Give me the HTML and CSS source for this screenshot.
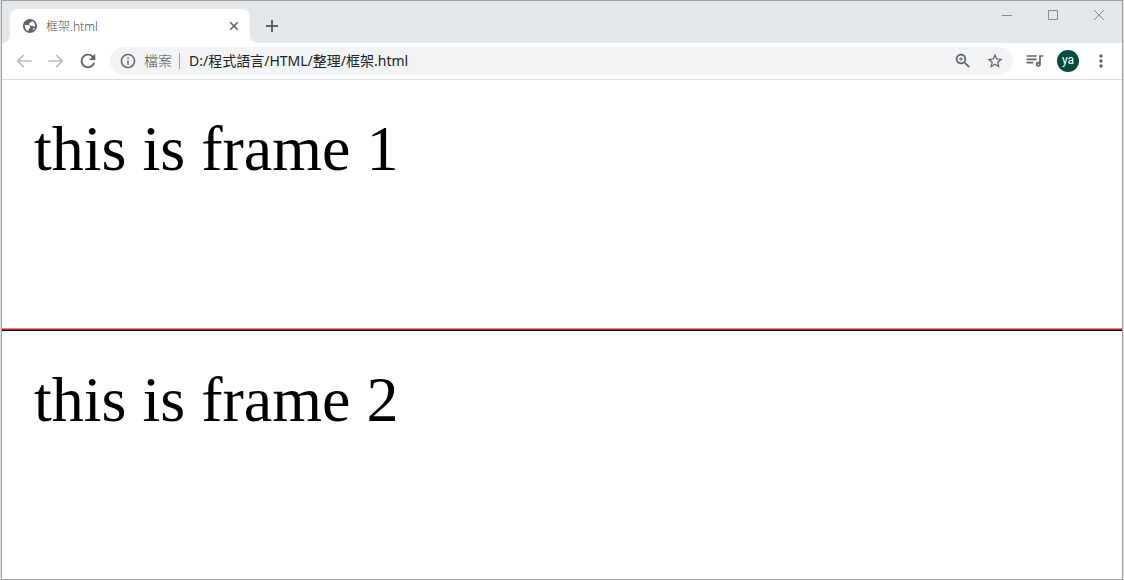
FILE: index.html
```html
<!DOCTYPE html>
<html lang="zh-Hant">
<head>
<meta charset="utf-8">
<meta name="viewport" content="width=device-width, initial-scale=1">
<title>框架.html</title>
<link rel="stylesheet" href="styles.css">
</head>
<body>
<div class="window">
  <header class="titlebar">
    <div class="tab">
      <svg class="icon-14" viewBox="2 2 20 20" aria-hidden="true"><path d="M12 2C6.48 2 2 6.48 2 12s4.48 10 10 10 10-4.48 10-10S17.52 2 12 2zM4.600 10.500H8.500c2.200 0 3.700 1 3.700 3.200 0 1.300-.8 2-2.200 2.200v3.400c-3.400-.8-5.700-4-5.400-8.800zM19.200 14.500c-.7 2-2.300 3.700-4.200 4.400 1.500-1.500 1-2.700 2-3.400.6-.6 1.400-.9 2.200-1zM19.400 12.200c-1.400.8-3 .2-3.700-.7h-3c-1.200-.2-2-1.200-2-2.400 0-1.300.9-2.100 2.100-2.200 1.300-.1 1.800-.7 1.800-2 3 .9 5 3.800 4.800 7.300z"/></svg>
      <span class="tab-title">框架.html</span>
      <button class="plain" aria-label="Close tab"><svg class="icon-16" viewBox="0 0 16 16"><path class="line cross" d="M4.200 4.200l7.600 7.600M11.800 4.200l-7.600 7.600"/></svg></button>
    </div>
    <button class="plain new-tab" aria-label="New tab"><svg class="icon-16" viewBox="0 0 16 16"><path class="line" d="M8 2v12M2 8h12"/></svg></button>
    <div class="controls">
      <button class="plain" aria-label="Minimize"><svg class="icon-12" viewBox="0 0 12 12"><path class="thin" d="M1 6.500h10"/></svg></button>
      <button class="plain" aria-label="Maximize"><svg class="icon-12" viewBox="0 0 12 12"><path class="thin" d="M1.500 1.500h9v9h-9z"/></svg></button>
      <button class="plain" aria-label="Close"><svg class="icon-12" viewBox="0 0 12 12"><path class="thin" d="M1 1l10 10M11 1L1 11"/></svg></button>
    </div>
  </header>
  <nav class="toolbar">
    <button class="plain muted" aria-label="Back"><svg class="icon-20" viewBox="0 0 24 24"><path d="M21 11H6.830l5.590-5.590L11 4l-8 8 8 8 1.410-1.410L6.830 13H21v-2z"/></svg></button>
    <button class="plain muted" aria-label="Forward"><svg class="icon-20" viewBox="0 0 24 24"><path d="M13 4l-1.410 1.410L17.170 11H3v2h14.170l-5.580 5.590L13 20l8-8z"/></svg></button>
    <button class="plain" aria-label="Reload"><svg class="icon-20" viewBox="1 1 22 22"><path d="M17.650 6.350C16.200 4.900 14.210 4 12 4c-4.420 0-7.990 3.580-7.990 8s3.570 8 7.990 8c3.730 0 6.840-2.550 7.730-6h-2.080c-.82 2.330-3.040 4-5.650 4-3.310 0-6-2.690-6-6s2.690-6 6-6c1.660 0 3.140.69 4.220 1.780L13 11h7V4l-2.350 2.350z"/></svg></button>
    <div class="omnibox">
      <svg class="icon-16" viewBox="1 1 22 22" aria-hidden="true"><path d="M11 17h2v-6h-2v6zm1-15C6.480 2 2 6.480 2 12s4.480 10 10 10 10-4.480 10-10S17.520 2 12 2zm0 18c-4.410 0-8-3.590-8-8s3.590-8 8-8 8 3.590 8 8-3.590 8-8 8zM11 9h2V7h-2v2z"/></svg>
      <label class="scheme" for="address">檔案</label>
      <input class="address" id="address" type="text" value="D:/程式語言/HTML/整理/框架.html">
      <button class="plain" aria-label="Zoom"><svg class="icon-16" viewBox="2 2 20 20"><path d="M15.500 14h-.79l-.28-.27C15.410 12.590 16 11.110 16 9.500 16 5.910 13.090 3 9.500 3S3 5.910 3 9.500 5.910 16 9.500 16c1.610 0 3.090-.59 4.230-1.570l.27.28v.79l5 4.990L20.490 19l-4.990-5zm-6 0C7.010 14 5 11.990 5 9.500S7.010 5 9.500 5 14 7.010 14 9.500 11.990 14 9.500 14zM12 10h-2v2H9v-2H7V9h2V7h1v2h2v1z"/></svg></button>
      <button class="plain" aria-label="Bookmark"><svg class="icon-16" viewBox="1.500 1.500 21 21"><path d="M22 9.240l-7.190-.62L12 2 9.190 8.630 2 9.240l5.460 4.730L5.820 21 12 17.270 18.180 21l-1.630-7.030L22 9.240zM12 15.400l-3.760 2.270 1-4.280-3.320-2.880 4.380-.38L12 6.100l1.710 4.040 4.380.38-3.320 2.880 1 4.280L12 15.400z"/></svg></button>
    </div>
    <div class="actions">
      <button class="plain" aria-label="Media"><svg class="icon-20" viewBox="0 0 24 24"><path d="M2 5h12v2H2zM2 9h12v2H2zM2 13h8v2H2zM16 5h6v2h-3v9a3 3 0 1 1-3-3c.35 0 .69.060 1 .18V5zM16 15a1 1 0 1 0 0 2 1 1 0 0 0 0-2z"/></svg></button>
      <button class="plain avatar" aria-label="Profile">ya</button>
      <button class="plain" aria-label="Menu"><svg class="icon-20" viewBox="0 0 24 24"><path d="M12 8c1.100 0 2-.9 2-2s-.9-2-2-2-2 .9-2 2 .9 2 2 2zm0 2c-1.100 0-2 .9-2 2s.9 2 2 2 2-.9 2-2-.9-2-2-2zm0 6c-1.100 0-2 .9-2 2s.9 2 2 2 2-.9 2-2-.9-2-2-2z"/></svg></button>
    </div>
  </nav>
  <main class="frames">
    <section class="frame">this is frame 1</section>
    <hr class="divider">
    <section class="frame">this is frame 2</section>
  </main>
</div>
</body>
</html>
```
FILE: styles.css
```css
* {
  box-sizing: border-box;
}

body {
  margin: 0;
  padding: 0 1px;
  background: #e0e0e0;
}

.window {
  display: flex;
  flex-direction: column;
  min-height: 100vh;
  border: 1px solid #a0a0a0;
  background: #fff;
  color: #5f6368;
  font-family: "Noto Sans", "Noto Sans CJK TC", sans-serif;
}

svg {
  display: block;
  flex: none;
  fill: currentColor;
}

.line,
.thin {
  fill: none;
  stroke: currentColor;
  stroke-width: 2;
}

.cross {
  stroke-width: 1.6;
}

.thin {
  stroke: #85888c;
  stroke-width: 1;
}

.icon-12 { width: 12px; height: 12px; }
.icon-14 { width: 14px; height: 14px; }
.icon-16 { width: 16px; height: 16px; }
.icon-20 { width: 20px; height: 20px; }

.plain {
  display: block;
  flex: none;
  padding: 0;
  border: 0;
  background: none;
  color: inherit;
  font: inherit;
}

.titlebar {
  display: flex;
  align-items: flex-end;
  height: 42px;
  padding-left: 8px;
  background: #e5e8eb;
}

.tab {
  position: relative;
  display: flex;
  align-items: center;
  gap: 9px;
  width: 240px;
  height: 34px;
  padding: 0 8px 0 13px;
  border-radius: 8px 8px 0 0;
  background: #fff;
}

.tab::before,
.tab::after {
  content: "";
  position: absolute;
  bottom: 0;
  width: 8px;
  height: 8px;
}

.tab::before {
  right: 100%;
  background: radial-gradient(circle at 0 0, transparent 8px, #fff 8px);
}

.tab::after {
  left: 100%;
  background: radial-gradient(circle at 100% 0, transparent 8px, #fff 8px);
}

.tab-title {
  flex: 1;
  color: #484c50;
  font-size: 12px;
  font-weight: 300;
}

.new-tab {
  margin: 0 0 9px 14px;
}

.controls {
  display: flex;
  align-self: flex-start;
  gap: 34px;
  margin-left: auto;
  padding: 8px 17px 0 0;
}

.toolbar {
  display: flex;
  align-items: center;
  gap: 12px;
  height: 37px;
  padding: 0 11px 0 12px;
  border-bottom: 1px solid #dadce0;
}

.muted {
  color: #bbbdbf;
}

.omnibox {
  display: flex;
  flex: 1;
  align-items: center;
  gap: 16px;
  min-width: 0;
  height: 28px;
  padding: 0 10px;
  border-radius: 14px;
  background: #f1f3f4;
}

.scheme {
  margin-left: -8px;
  padding-right: 7px;
  border-right: 1px solid #9aa0a6;
  color: #484c50;
  font-size: 14px;
  font-weight: 300;
  line-height: 16px;
}

.address {
  flex: 1;
  min-width: 0;
  margin-left: -7px;
  padding: 0;
  border: 0;
  background: none;
  color: #202124;
  font: 400 14px/20px "Noto Sans", "Noto Sans CJK TC", sans-serif;
  outline: 0;
}

.actions {
  display: flex;
  align-items: center;
  gap: 12px;
}

.avatar {
  width: 22px;
  height: 22px;
  padding-bottom: 2px;
  border-radius: 50%;
  background: #004d40;
  color: #fff;
  font: 400 12px/20px Roboto, sans-serif;
}

.frames {
  display: flex;
  flex: 1;
  flex-direction: column;
  color: #000;
  font: 64px/74px "Liberation Serif", serif;
}

.frame {
  flex: 1 0 0;
  padding: 32px;
}

.divider {
  width: 100%;
  height: 3px;
  margin: 0;
  border: 0;
  border-top: 1px solid #ec8088;
  border-bottom: 1px solid #000;
  background: #a0303a;
}
```
